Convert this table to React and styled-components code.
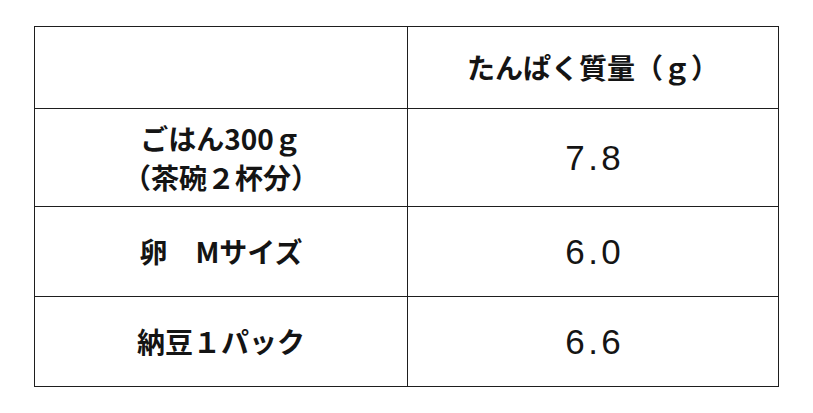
import React from "react";
import styled, { createGlobalStyle } from "styled-components";

const Global = createGlobalStyle`
  html, body { margin: 0; padding: 0; background: #ffffff; }
  body { font-family: "Noto Sans CJK JP", "Noto Sans", sans-serif; color: #111; }
`;

const Page = styled.div`
  padding: 26px 0 0 34px;
`;

const Table = styled.table`
  border-collapse: collapse;
  table-layout: fixed;
  width: 745px;
`;

const Row = styled.tr`
  height: ${(p) => p.$h}px;
`;

const Cell = styled.td`
  border: 1px solid #1e1e1e;
  padding: 0;
  text-align: center;
  vertical-align: middle;
  font-family: "Noto Sans CJK JP", "Noto Sans", sans-serif;
  font-weight: 700;
  font-size: 28px;
  line-height: 39px;
  color: #141414;
  text-spacing-trim: space-all;
  width: ${(p) => (p.$w ? `${p.$w}px` : "auto")};
`;

const NumCell = styled(Cell)`
  font-family: "Liberation Sans", Arial, sans-serif;
  font-weight: 400;
  font-size: 35px;
  letter-spacing: 3.5px;
  padding-left: 3.5px;
`;

const rows = [
  { h: 98, label: ["ごはん300ｇ", "（茶碗２杯分）"], value: "7.8" },
  { h: 90, label: ["卵　Mサイズ"], value: "6.0" },
  { h: 90, label: ["納豆１パック"], value: "6.6" },
];

export default function App() {
  return (
    <>
      <Global />
      <Page>
        <Table>
          <tbody>
            <Row $h={82}>
              <Cell $w={372}></Cell>
              <Cell>たんぱく質量（ｇ）</Cell>
            </Row>
            {rows.map((r) => (
              <Row key={r.value} $h={r.h}>
                <Cell>
                  {r.label.map((l, i) => (
                    <div key={i}>{l}</div>
                  ))}
                </Cell>
                <NumCell>{r.value}</NumCell>
              </Row>
            ))}
          </tbody>
        </Table>
      </Page>
    </>
  );
}
